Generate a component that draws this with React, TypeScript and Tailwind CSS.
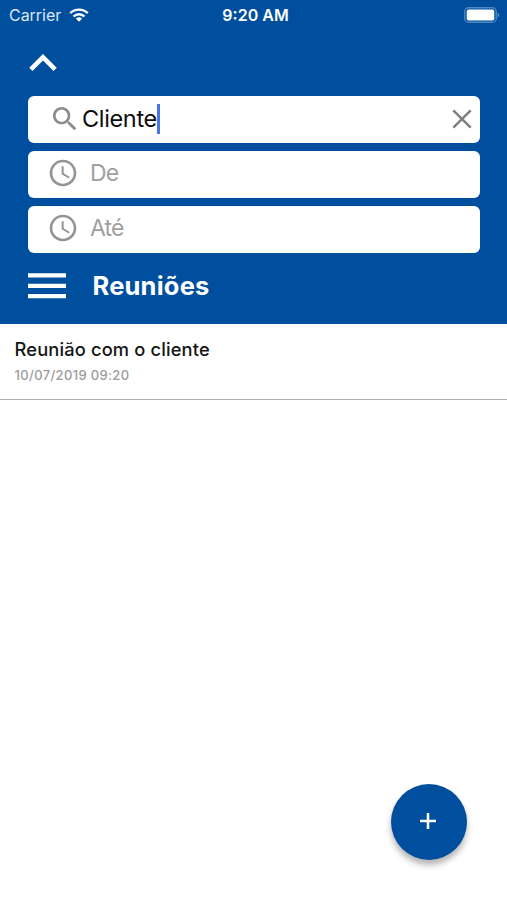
import React, { useState } from 'react';

interface Meeting {
  id: number;
  title: string;
  date: string;
}

const meetings: Meeting[] = [{ id: 1, title: 'Reunião com o cliente', date: '10/07/2019 09:20' }];

const StatusBar: React.FC = () => (
  <div className="grid grid-cols-3 items-center h-[30px] pl-[9px] pr-[7px] text-white">
    <div className="flex items-center gap-[8px]">
      <span className="text-[16px] leading-[30px] tracking-[-0.03px] text-[#dbe7f5]">Carrier</span>
      <svg className="w-[20px] h-[14px]" viewBox="0 0 20 14" fill="none" stroke="currentColor" strokeWidth="2.4">
        <path d="M1.2 5.2a12.6 12.6 0 0 1 17.6 0" />
        <path d="M4.5 8.5a7.9 7.9 0 0 1 11 0" />
        <path d="M10 13.8l-3.2-3.2a4.5 4.5 0 0 1 6.4 0z" fill="currentColor" stroke="none" />
      </svg>
    </div>
    <span className="pl-[2px] text-center text-[16px] leading-[30px] font-semibold">9:20 AM</span>
    <svg className="justify-self-end w-[36px] h-[16px]" viewBox="0 0 36 16">
      <rect x="0.75" y="0.75" width="31.5" height="14.5" rx="4" fill="none" stroke="#5288c0" strokeWidth="1.3" />
      <rect x="2.7" y="2.6" width="27.6" height="10.8" rx="2" fill="#fff" />
      <path d="M33.6 5.4c2.2.8 2.2 4.4 0 5.2z" fill="#5288c0" />
    </svg>
  </div>
);

const ClockIcon: React.FC = () => (
  <svg className="w-[32px] h-[32px] text-[#949494]" viewBox="0 0 24 24" fill="currentColor">
    <path d="M11.99 2C6.47 2 2 6.48 2 12s4.47 10 9.99 10C17.52 22 22 17.52 22 12S17.52 2 11.99 2zM12 20c-4.42 0-8-3.58-8-8s3.58-8 8-8 8 3.58 8 8-3.58 8-8 8z" />
    <path d="M12.5 7H11v6l5.25 3.15.75-1.23-4.5-2.67z" />
  </svg>
);

const DateField: React.FC<{ label: string }> = ({ label }) => (
  <div className="flex items-center h-[47px] pl-[19px] pb-[2px] rounded-[6px] bg-white">
    <ClockIcon />
    <span className="ml-[11px] text-[23px] leading-[46px] tracking-[-0.8px] text-[#a0a0a0]">{label}</span>
  </div>
);

const App: React.FC = () => {
  const [search, setSearch] = useState('Cliente');

  return (
    <div className="relative flex flex-col w-full h-screen overflow-hidden bg-white font-['Inter',sans-serif]">
      <header className="h-[324px] bg-[#004f9f]">
        <StatusBar />
        <button className="block mt-[24px] ml-[28.5px]" aria-label="Recolher">
          <svg className="w-[28px] h-[17px]" viewBox="6 8 12 7.41" fill="#fff">
            <path d="M12 8l-6 6 1.41 1.41L12 10.83l4.59 4.58L18 14z" />
          </svg>
        </button>

        <div className="flex flex-col gap-2 mt-[24.5px] ml-[28px] mr-[27px]">
          <div className="flex items-center h-[47px] pl-[21px] pr-[8px] rounded-[6px] bg-white">
            <svg className="w-[32px] h-[32px] text-[#8c8c8c]" viewBox="0 0 24 24" fill="currentColor">
              <path d="M15.5 14h-.79l-.28-.27C15.41 12.59 16 11.11 16 9.5 16 5.91 13.09 3 9.5 3S3 5.91 3 9.5 5.91 16 9.5 16c1.61 0 3.09-.59 4.23-1.57l.27.28v.79l5 4.99L20.49 19l-4.99-5zm-6 0C7.01 14 5 11.99 5 9.5S7.01 5 9.5 5 14 7.01 14 9.5 11.99 14 9.5 14z" />
            </svg>
            <span className="ml-[1px] text-[23.5px] leading-[46px] tracking-[-0.35px] text-[#0c0c0c]">{search}</span>
            {search && <span className="w-[3px] h-[30px] bg-[#4c72e4]" />}
            <button className="ml-auto" onClick={() => setSearch('')} aria-label="Limpar">
              <svg className="w-[20px] h-[20px]" viewBox="0 0 20 20" stroke="#7f7f7f" strokeWidth="2.5">
                <path d="M1.3 1.3l17.4 17.4M18.7 1.3L1.3 18.7" />
              </svg>
            </button>
          </div>
          <DateField label="De" />
          <DateField label="Até" />
        </div>

        <div className="flex items-center mt-[20px] ml-[28px] h-[26px]">
          <button aria-label="Menu">
            <svg className="w-[38px] h-[26px]" viewBox="0 0 38 26" stroke="#fff" strokeWidth="4.3">
              <path d="M0 2.4h38M0 12.8h38M0 23.2h38" />
            </svg>
          </button>
          <h1 className="ml-[26.5px] text-[25.5px] leading-[26px] tracking-[0.2px] font-bold text-white">Reuniões</h1>
        </div>
      </header>

      <main>
        {meetings.map((meeting) => (
          <div key={meeting.id} className="h-[76px] pt-[13px] pl-[14.5px] border-b border-[#adadad]">
            <p className="text-[18.3px] leading-[24px] tracking-[0.15px] font-[550] text-[#141414]">{meeting.title}</p>
            <p className="mt-[5px] text-[13px] leading-[18px] tracking-[0.35px] font-medium text-[#9c9c9c]">{meeting.date}</p>
          </div>
        ))}
      </main>

      <button
        className="absolute right-[40.5px] bottom-[40px] flex items-center justify-center w-[76px] h-[76px] pr-[2px] pb-[2px] rounded-full bg-[#004f9f] shadow-[0_5px_6px_rgba(0,0,0,0.3)]"
        aria-label="Adicionar"
      >
        <svg className="w-[16px] h-[16px]" viewBox="0 0 16 16" stroke="#fff" strokeWidth="2.5">
          <path d="M8 0v16M0 8h16" />
        </svg>
      </button>
    </div>
  );
};

export default App;
